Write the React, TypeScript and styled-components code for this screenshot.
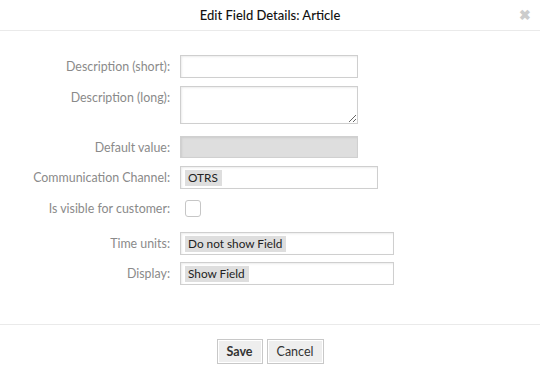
import React from 'react';
import styled, { createGlobalStyle } from 'styled-components';

const GlobalStyle = createGlobalStyle`
  html, body {
    margin: 0;
    padding: 0;
    background: #fff;
    font-family: Lato, "Open Sans", sans-serif;
  }
`;

const Dialog = styled.div`
  width: 540px;
  height: 379px;
  background: #fff;
  display: flex;
  flex-direction: column;
`;

const Header = styled.div`
  height: 30px;
  border-bottom: 1px solid #eaeaea;
  display: flex;
  align-items: center;
  justify-content: center;
  position: relative;
`;

const Title = styled.h1`
  margin: 0;
  font-size: 13px;
  font-weight: 500;
  color: #111;
`;

const Close = styled.span`
  position: absolute;
  right: 9px;
  top: 8px;
  font-size: 14px;
  font-weight: 700;
  color: #ccc;
  line-height: 14px;
`;

const Form = styled.div`
  flex: 1;
  padding-top: 24px;
  display: flex;
  flex-direction: column;
`;

const Row = styled.div<{ $top: number; $align?: string }>`
  display: grid;
  grid-template-columns: 170px auto;
  column-gap: 10px;
  align-items: ${p => p.$align || 'center'};
  margin-top: ${p => p.$top}px;
`;

const Label = styled.label<{ $pad?: number }>`
  text-align: right;
  font-size: 12.4px;
  color: #8a8a8a;
  padding-top: ${p => p.$pad || 0}px;
`;

const inputBase = `
  box-sizing: border-box;
  border: 1px solid #cfcfcf;
  background: #fff;
  box-shadow: inset 1px 1px 2px rgba(0, 0, 0, 0.08);
  font-family: inherit;
  font-size: 12px;
  margin: 0;
  outline: none;
`;

const TextInput = styled.input<{ $w: number; $disabled?: boolean }>`
  ${inputBase}
  width: ${p => p.$w}px;
  height: ${p => (p.$disabled ? 22 : 23)}px;
  background: ${p => (p.$disabled ? '#dedede' : '#fff')};
  border-color: ${p => (p.$disabled ? '#d0d0d0' : '#cfcfcf')};
  display: block;
`;

const TextArea = styled.textarea`
  ${inputBase}
  width: 178px;
  height: 38px;
  display: block;
  resize: vertical;
`;

const Select = styled.div<{ $w: number }>`
  ${inputBase}
  width: ${p => p.$w}px;
  height: 23px;
  display: flex;
  align-items: center;
  padding-left: 4px;
`;

const Tag = styled.span`
  background: #dedede;
  color: #222;
  font-size: 11.8px;
  padding: 1px 4px 1px 3px;
  line-height: 14px;
`;

const Checkbox = styled.span`
  box-sizing: border-box;
  display: block;
  width: 16px;
  height: 17px;
  margin-left: 5px;
  border: 1px solid #c6c6c6;
  border-radius: 3px;
  background: #fff;
`;

const Footer = styled.div`
  height: 55px;
  border-top: 1px solid #eaeaea;
  display: flex;
  justify-content: center;
  align-items: flex-start;
  padding-top: 14px;
  gap: 4px;
  box-sizing: border-box;
`;

const Button = styled.button<{ $primary?: boolean }>`
  height: 25px;
  padding: 0 9px;
  background: #eee;
  border: 1px solid #c8c8c8;
  box-shadow: inset 0 0 0 1px #fff;
  font-family: inherit;
  font-size: 12.5px;
  font-weight: ${p => (p.$primary ? 700 : 400)};
  color: #333;
`;

export default function App() {
  return (
    <Dialog>
      <GlobalStyle />
      <Header>
        <Title>Edit Field Details: Article</Title>
        <Close>✖</Close>
      </Header>
      <Form>
        <Row $top={0}>
          <Label>Description (short):</Label>
          <TextInput $w={178} />
        </Row>
        <Row $top={8} $align="start">
          <Label $pad={4}>Description (long):</Label>
          <TextArea />
        </Row>
        <Row $top={12}>
          <Label>Default value:</Label>
          <TextInput $w={178} $disabled disabled />
        </Row>
        <Row $top={8}>
          <Label>Communication Channel:</Label>
          <Select $w={198}>
            <Tag>OTRS</Tag>
          </Select>
        </Row>
        <Row $top={11}>
          <Label>Is visible for customer:</Label>
          <Checkbox />
        </Row>
        <Row $top={15}>
          <Label>Time units:</Label>
          <Select $w={214}>
            <Tag>Do not show Field</Tag>
          </Select>
        </Row>
        <Row $top={7}>
          <Label>Display:</Label>
          <Select $w={214}>
            <Tag>Show Field</Tag>
          </Select>
        </Row>
      </Form>
      <Footer>
        <Button $primary>Save</Button>
        <Button>Cancel</Button>
      </Footer>
    </Dialog>
  );
}
